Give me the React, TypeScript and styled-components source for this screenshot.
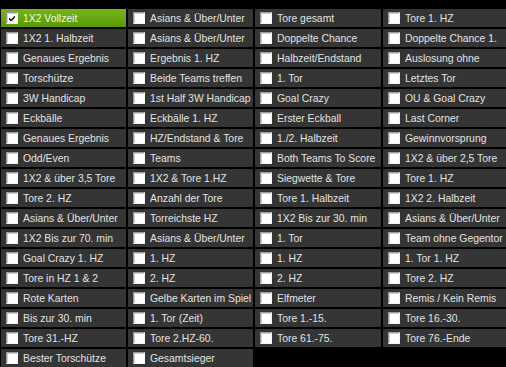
import React from "react";
import styled, { createGlobalStyle } from "styled-components";

const Global = createGlobalStyle`
  html, body { margin: 0; padding: 0; background: #000; overflow: hidden; }
  body { font-family: "Liberation Sans", Arial, sans-serif; }
`;

const rows: string[][] = [
  ["1X2 Vollzeit", "Asians & Über/Unter", "Tore gesamt", "Tore 1. HZ"],
  ["1X2 1. Halbzeit", "Asians & Über/Unter", "Doppelte Chance", "Doppelte Chance 1."],
  ["Genaues Ergebnis", "Ergebnis 1. HZ", "Halbzeit/Endstand", "Auslosung ohne"],
  ["Torschütze", "Beide Teams treffen", "1. Tor", "Letztes Tor"],
  ["3W Handicap", "1st Half 3W Handicap", "Goal Crazy", "OU & Goal Crazy"],
  ["Eckbälle", "Eckbälle 1. HZ", "Erster Eckball", "Last Corner"],
  ["Genaues Ergebnis", "HZ/Endstand & Tore", "1./2. Halbzeit", "Gewinnvorsprung"],
  ["Odd/Even", "Teams", "Both Teams To Score", "1X2 & über 2,5 Tore"],
  ["1X2 & über 3,5 Tore", "1X2 & Tore 1.HZ", "Siegwette & Tore", "Tore 1. HZ"],
  ["Tore 2. HZ", "Anzahl der Tore", "Tore 1. Halbzeit", "1X2 2. Halbzeit"],
  ["Asians & Über/Unter", "Torreichste HZ", "1X2 Bis zur 30. min", "Asians & Über/Unter"],
  ["1X2 Bis zur 70. min", "Asians & Über/Unter", "1. Tor", "Team ohne Gegentor"],
  ["Goal Crazy 1. HZ", "1. HZ", "1. HZ", "1. Tor 1. HZ"],
  ["Tore in HZ 1 & 2", "2. HZ", "2. HZ", "Tore 2. HZ"],
  ["Rote Karten", "Gelbe Karten im Spiel", "Elfmeter", "Remis / Kein Remis"],
  ["Bis zur 30. min", "1. Tor (Zeit)", "Tore 1.-15.", "Tore 16.-30."],
  ["Tore 31.-HZ", "Tore 2.HZ-60.", "Tore 61.-75.", "Tore 76.-Ende"],
  ["Bester Torschütze", "Gesamtsieger"],
];

const Grid = styled.div`
  display: grid;
  grid-template-columns: 125px 125px 126px 126px;
  grid-auto-rows: 18px;
  gap: 2px;
  padding: 9px 0 0 1px;
  width: 520px;
`;

const Cell = styled.label<{ $active?: boolean }>`
  display: flex;
  align-items: center;
  gap: 4px;
  padding-left: 5px;
  overflow: hidden;
  white-space: nowrap;
  font-size: 10.4px;
  color: ${(p) => (p.$active ? "#f0f6e4" : "#e2e2e2")};
  background: ${(p) =>
    p.$active ? "linear-gradient(#75b41a, #5a9a08)" : "#353535"};
`;

const Box = styled.span`
  box-sizing: border-box;
  flex: none;
  width: 12px;
  height: 12px;
  margin-right: 1px;
  background: #fff;
  border-style: solid;
  border-width: 1px;
  border-color: #9a9a9a #f4f4f4 #f4f4f4 #9a9a9a;
  box-shadow: inset 1px 1px 0 #d0d0d0;
  display: flex;
  align-items: center;
  justify-content: center;
`;

const Check = () => (
  <svg width="8" height="8" viewBox="0 0 8 8">
    <path d="M1 3.5 L3 5.5 L7 1.5 L7 3.5 L3 7.5 L1 5.5 Z" fill="#000" />
  </svg>
);

export default function App() {
  return (
    <>
      <Global />
      <Grid>
        {rows.flatMap((r, ri) =>
          r.map((t, ci) => {
            const active = ri === 0 && ci === 0;
            return (
              <Cell key={`${ri}-${ci}`} $active={active}>
                <Box>{active && <Check />}</Box>
                {t}
              </Cell>
            );
          })
        )}
      </Grid>
    </>
  );
}
